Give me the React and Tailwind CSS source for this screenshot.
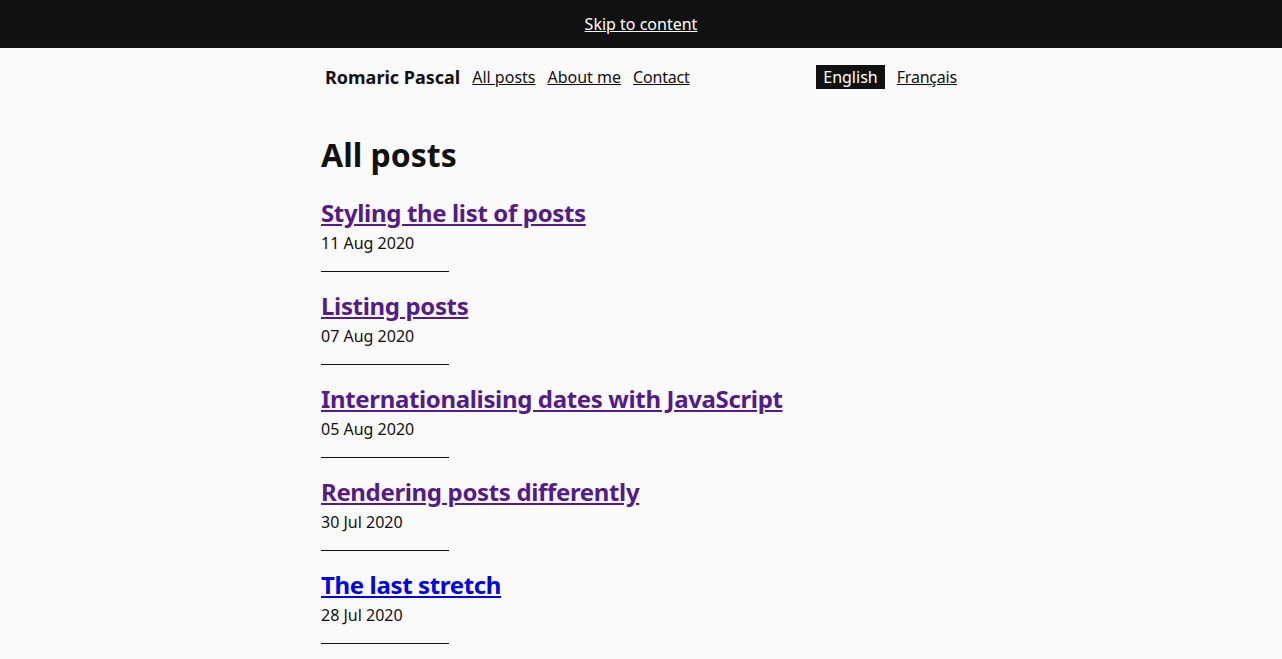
import React from 'react';

const posts = [
  { title: 'Styling the list of posts', date: '11 Aug 2020', visited: true },
  { title: 'Listing posts', date: '07 Aug 2020', visited: true },
  { title: 'Internationalising dates with JavaScript', date: '05 Aug 2020', visited: true },
  { title: 'Rendering posts differently', date: '30 Jul 2020', visited: true },
  { title: 'The last stretch', date: '28 Jul 2020', visited: false },
];

export default function App() {
  return (
    <div className="min-h-screen bg-[#fafafa] text-[#111] font-['Noto_Sans',sans-serif]">
      <div className="h-12 bg-[#111] flex items-center justify-center">
        <a href="#content" className="text-white underline text-base">Skip to content</a>
      </div>

      <div className="w-[640px] mx-auto">
        <nav className="flex items-center justify-between px-1 mt-[17px] h-6">
          <div className="flex items-center gap-3">
            <span className="font-bold text-lg">Romaric Pascal</span>
            <a href="#" className="underline text-base">All posts</a>
            <a href="#" className="underline text-base">About me</a>
            <a href="#" className="underline text-base tracking-[-0.2px]">Contact</a>
          </div>
          <div className="flex items-center gap-3">
            <span className="bg-[#111] text-white px-[7px] h-6 leading-6 text-base">English</span>
            <a href="#" className="underline text-base tracking-[-0.2px]">Français</a>
          </div>
        </nav>

        <main id="content" className="mt-[46px]">
          <h1 className="text-[32px] leading-10 font-bold">All posts</h1>
          <ul className="mt-[23px]">
            {posts.map((p) => (
              <li key={p.title} className="mb-[19px]">
                <a
                  href="#"
                  className={`text-2xl leading-[30px] font-bold underline tracking-[-0.35px] ${p.visited ? 'text-[#551a8b]' : 'text-[#0000ee]'}`}
                >
                  {p.title}
                </a>
                <div className="mt-[3px] text-base leading-6">{p.date}</div>
                <div className="mt-4 w-32 h-px bg-[#111]"></div>
              </li>
            ))}
          </ul>
        </main>
      </div>
    </div>
  );
}
